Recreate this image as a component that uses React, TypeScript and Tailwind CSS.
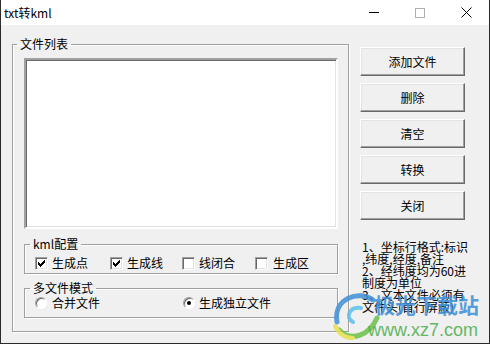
import React from 'react';

function Btn({ children }: { children: React.ReactNode }) {
  return (
    <div className="flex h-[29px] w-[105px] items-center justify-center border border-t-white border-l-white border-r-[#696969] border-b-[#696969] bg-[#f0f0f0] text-[12px] leading-[14px] text-black shadow-[inset_-1px_-1px_0_#a0a0a0,inset_1px_1px_0_#e3e3e3]">
      {children}
    </div>
  );
}

function Check({ on }: { on: boolean }) {
  const cols = [2, 3, 4, 3, 2, 1, 0];
  return (
    <span className="flex h-[13px] w-[13px] shrink-0 items-center justify-center border border-t-[#a0a0a0] border-l-[#a0a0a0] border-r-white border-b-white bg-white shadow-[inset_1px_1px_0_#696969,inset_-1px_-1px_0_#e3e3e3]">
      {on && (
        <svg width="7" height="7" viewBox="0 0 7 7" shapeRendering="crispEdges">
          {cols.map((y, x) => (
            <rect key={x} x={x} y={y} width="1" height="3" fill="#000" />
          ))}
        </svg>
      )}
    </span>
  );
}

function Radio({ on }: { on: boolean }) {
  return (
    <span className="flex h-[12px] w-[12px] shrink-0 items-center justify-center rounded-full border border-t-[#a0a0a0] border-l-[#a0a0a0] border-r-white border-b-white bg-white shadow-[inset_1px_1px_0_#696969]">
      {on && <span className="h-[4px] w-[4px] rounded-full bg-black" />}
    </span>
  );
}

const groupCls =
  'border border-[#a0a0a0] shadow-[inset_1px_1px_0_#fff,1px_1px_0_#fff]';

export default function App() {
  return (
    <div className="relative h-[344px] w-[490px] overflow-hidden border-x border-b border-[#2b2b2b] bg-[#f0f0f0] font-['Noto_Sans_CJK_SC',sans-serif] text-black">
      {/* title bar */}
      <div className="flex h-[25px] items-center bg-white">
        <span className="pl-[3px] text-[12px] leading-[14px]">txt转kml</span>
        <div className="ml-auto flex h-full">
          <div className="flex w-[46px] items-center justify-center">
            <span className="h-px w-[10px] bg-black" />
          </div>
          <div className="flex w-[46px] items-center justify-center">
            <span className="h-[10px] w-[10px] border border-[#b0b0b0]" />
          </div>
          <div className="flex w-[46px] items-center justify-center">
            <svg width="11" height="11" viewBox="0 0 11 11">
              <path d="M0.5 0.5 L10.5 10.5 M10.5 0.5 L0.5 10.5" stroke="#000" strokeWidth="1" />
            </svg>
          </div>
        </div>
      </div>

      {/* client */}
      <div className="flex items-start pl-[11px] pt-[12px]">
        <fieldset className={`w-[337px] pb-[13px] ${groupCls}`}>
          <legend className="ml-[4px] px-[3px] text-[12px] leading-[14px]">文件列表</legend>
          <div className="ml-[11px] mt-[7px] flex w-[314px] flex-col">
            <div className="h-[171px] w-[314px] border-2 border-t-[#a0a0a0] border-l-[#a0a0a0] border-r-white border-b-white bg-white shadow-[inset_1px_1px_0_#696969,inset_-1px_-1px_0_#e3e3e3]" />

            <fieldset className={`mt-[8px] pb-[3px] ${groupCls}`}>
              <legend className="ml-[5px] px-[3px] text-[12px] leading-[14px]">kml配置</legend>
              <div className="mt-[5px] flex h-[14px] items-center pl-[10px] text-[12px] leading-[14px]">
                <label className="flex w-[75px] items-center gap-[4px]">
                  <Check on />
                  <span>生成点</span>
                </label>
                <label className="flex w-[72px] items-center gap-[4px]">
                  <Check on />
                  <span>生成线</span>
                </label>
                <label className="flex w-[73px] items-center gap-[4px]">
                  <Check on={false} />
                  <span>线闭合</span>
                </label>
                <label className="flex items-center gap-[5px]">
                  <Check on={false} />
                  <span>生成区</span>
                </label>
              </div>
            </fieldset>

            <fieldset className={`mt-[7px] pb-[7px] ${groupCls}`}>
              <legend className="ml-[5px] px-[3px] text-[12px] leading-[14px]">多文件模式</legend>
              <div className="mt-[1px] flex h-[14px] items-center pl-[10px] text-[12px] leading-[14px]">
                <label className="flex w-[148px] items-center gap-[5px]">
                  <Radio on={false} />
                  <span>合并文件</span>
                </label>
                <label className="flex items-center gap-[4px]">
                  <Radio on />
                  <span>生成独立文件</span>
                </label>
              </div>
            </fieldset>
          </div>
        </fieldset>

        <div className="ml-[11px] mt-[10px] flex flex-col">
          <div className="flex flex-col gap-[7px]">
            <Btn>添加文件</Btn>
            <Btn>删除</Btn>
            <Btn>清空</Btn>
            <Btn>转换</Btn>
            <Btn>关闭</Btn>
          </div>
          <div className="ml-[2px] mt-[21px] whitespace-nowrap text-[12px] leading-[12px]">
            <div>1、坐标行格式:标识</div>
            <div>,纬度,经度,备注</div>
            <div>2、经纬度均为60进</div>
            <div>制度为单位</div>
            <div>3、文本文件必须有</div>
            <div>文件头(首行屏蔽)</div>
          </div>
        </div>
      </div>

      {/* watermark */}
      <div className="pointer-events-none absolute left-[328px] top-[288px] h-[56px] w-[160px]">
        <svg className="absolute left-0 top-0" width="60" height="56" viewBox="0 0 60 56" fill="none" opacity="0.85">
          <path d="M44 12 C30 2 4 10 8 34" stroke="#3f8fd6" strokeWidth="5" strokeLinecap="round" />
          <path d="M32 20 C20 18 16 30 24 34" stroke="#5cc0e8" strokeWidth="4" strokeLinecap="round" />
          <path d="M10 42 C22 54 40 48 48 30" stroke="#6cc04a" strokeWidth="5" strokeLinecap="round" />
          <path d="M6 38 C10 46 16 50 24 50" stroke="#e6e04a" strokeWidth="4" strokeLinecap="round" />
        </svg>
        <div className="absolute left-[45px] top-[5px] text-[21px] font-bold leading-[22px] text-[#3d8fd8] opacity-85">
          极光下载站
        </div>
        <div className="absolute left-[39px] top-[31px] font-['Liberation_Sans',sans-serif] text-[18px] leading-[22px] text-[#4cae4c] opacity-85">
          www.xz7.com
        </div>
      </div>
    </div>
  );
}
